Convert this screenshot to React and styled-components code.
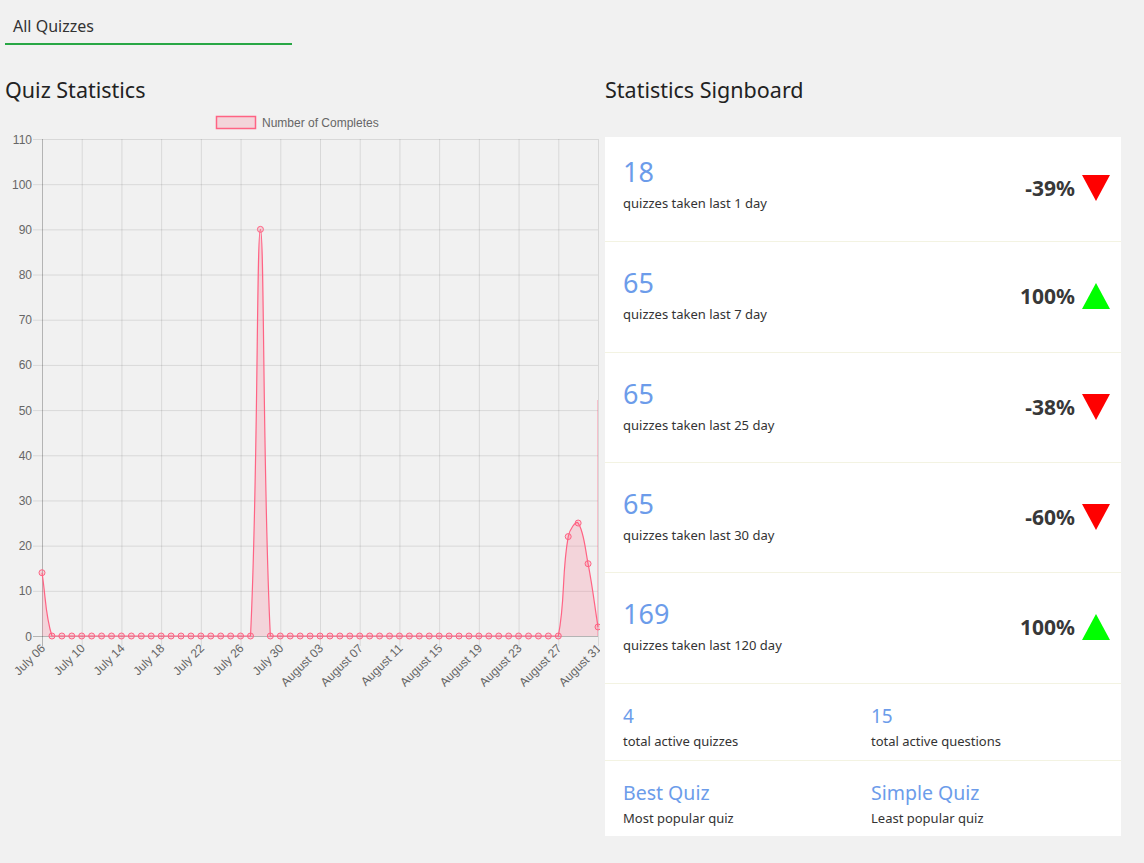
import styled, { createGlobalStyle } from "styled-components";

const GlobalStyle = createGlobalStyle`
  html, body {
    margin: 0;
    padding: 0;
    background: #f1f1f1;
    font-family: "Noto Sans", "Open Sans", sans-serif;
    color: #222;
  }
`;

const Page = styled.div`
  width: 1144px;
  min-height: 863px;
`;

const TabBar = styled.div`
  padding: 15px 0 0 5px;
`;

const Tab = styled.div`
  width: 287px;
  padding: 0 8px 6px;
  box-sizing: border-box;
  font-size: 16px;
  line-height: 22px;
  color: #333;
  border-bottom: 2px solid #28a745;
`;

const Columns = styled.div`
  display: grid;
  grid-template-columns: 600px 516px;
  column-gap: 5px;
  margin-top: 30px;
`;

const Column = styled.div`
  display: flex;
  flex-direction: column;
`;

const Heading = styled.h2`
  margin: 0;
  padding-left: ${({ $inset }) => ($inset ? "5px" : "0")};
  font-size: 21.5px;
  font-weight: 400;
  line-height: 30px;
  color: #222;
`;

const Board = styled.div`
  margin-top: 32px;
  background: #fff;
`;

const StatRow = styled.div`
  display: flex;
  align-items: center;
  justify-content: space-between;
  height: ${({ $h }) => $h}px;
  padding: 0 11px 0 18px;
  box-sizing: border-box;
  border-bottom: 1px solid #f3f3e2;
`;

const StatText = styled.div`
  display: flex;
  flex-direction: column;
  margin-top: ${({ $lift }) => -$lift}px;
`;

const BigNumber = styled.div`
  font-size: 27px;
  line-height: 32px;
  color: #6c9cea;
`;

const Caption = styled.div`
  font-size: 13px;
  line-height: 18px;
  color: #333;
  margin-top: ${({ $gap }) => $gap || 0}px;
`;

const Change = styled.div`
  display: flex;
  align-items: center;
  gap: 7px;
  font-size: 21px;
  font-weight: 700;
  color: #383838;
  margin-top: -2px;
`;

const Triangle = styled.span`
  width: 0;
  height: 0;
  border-left: 14px solid transparent;
  border-right: 14px solid transparent;
  ${({ $up }) =>
    $up
      ? "border-bottom: 26px solid #00ff00;"
      : "border-top: 26px solid #ff0000;"}
`;

const PairRow = styled.div`
  display: grid;
  grid-template-columns: 248px 1fr;
  align-items: start;
  height: ${({ $h }) => $h}px;
  padding: 20px 0 0 18px;
  box-sizing: border-box;
  border-bottom: ${({ $last }) => ($last ? "none" : "1px solid #f3f3e2")};
`;

const PairCell = styled.div`
  display: flex;
  flex-direction: column;
`;

const MidNumber = styled.div`
  font-size: 19px;
  line-height: 24px;
  color: #6c9cea;
`;

const QuizName = styled.div`
  font-size: 19.5px;
  line-height: 24px;
  color: #6c9cea;
`;

const ChartSvg = styled.svg`
  display: block;
  margin-top: 5px;
  font-family: "Liberation Sans", Arial, sans-serif;
`;

const stats = [
  { n: 18, days: 1, pct: "-39%", up: false, h: 105, lift: 10 },
  { n: 65, days: 7, pct: "100%", up: true, h: 111, lift: 4 },
  { n: 65, days: 25, pct: "-38%", up: false, h: 110, lift: 4 },
  { n: 65, days: 30, pct: "-60%", up: false, h: 110, lift: 4 },
  { n: 169, days: 120, pct: "100%", up: true, h: 111, lift: 4 },
];

const data = [
  14, ...Array(21).fill(0), 90, ...Array(30).fill(0), 22, 25, 16, 2,
];

const L = 42;
const R = 598;
const T = 29;
const B = 526;
const xAt = (i) => L + (i * (R - L)) / (data.length - 1);
const yAt = (v) => B - (v * (B - T)) / 110;

function curvePath(pts) {
  const t = 0.4;
  const ctrl = pts.map((p, i) => {
    const prev = pts[i - 1] || p;
    const next = pts[i + 1] || p;
    const d01 = Math.hypot(p.x - prev.x, p.y - prev.y);
    const d12 = Math.hypot(next.x - p.x, next.y - p.y);
    const sum = d01 + d12 || 1;
    const fa = (t * d01) / sum;
    const fb = (t * d12) / sum;
    const cap = (y) => Math.min(B, Math.max(T, y));
    return {
      px: p.x - fa * (next.x - prev.x),
      py: cap(p.y - fa * (next.y - prev.y)),
      nx: p.x + fb * (next.x - prev.x),
      ny: cap(p.y + fb * (next.y - prev.y)),
    };
  });
  let d = `M${pts[0].x},${pts[0].y}`;
  for (let i = 1; i < pts.length; i++) {
    const a = ctrl[i - 1];
    const b = ctrl[i];
    d += ` C${a.nx},${a.ny} ${b.px},${b.py} ${pts[i].x},${pts[i].y}`;
  }
  return d;
}

const labels = [
  "July 06", "July 10", "July 14", "July 18", "July 22", "July 26",
  "July 30", "August 03", "August 07", "August 11", "August 15",
  "August 19", "August 23", "August 27", "August 31",
];

function Chart() {
  const pts = data.map((v, i) => ({ x: xAt(i), y: yAt(v) }));
  const line = curvePath(pts);
  const area = `${line} L${R},${B} L${L},${B} Z`;
  const yTicks = Array.from({ length: 12 }, (_, i) => i * 10);

  return (
    <ChartSvg width="600" height="590" viewBox="0 0 600 590">
      <rect x="216.5" y="6.5" width="39" height="12" fill="rgba(255,99,132,0.2)" stroke="rgb(255,99,132)" strokeWidth="1.5" />
      <text x="262" y="16.5" fontSize="12" fill="#666">Number of Completes</text>

      {yTicks.map((v) => (
        <g key={v}>
          <line x1="33" x2={R} y1={yAt(v) + 0.5} y2={yAt(v) + 0.5} stroke={v === 0 ? "rgba(0,0,0,0.25)" : "rgba(0,0,0,0.1)"} />
          <text x="32" y={yAt(v) + 4.5} fontSize="12" fill="#666" textAnchor="end">{v}</text>
        </g>
      ))}

      {labels.map((lab, k) => {
        const x = xAt(k * 4);
        return (
          <g key={lab}>
            <line x1={x + 0.5} x2={x + 0.5} y1={T} y2={B + 10} stroke={k === 0 ? "rgba(0,0,0,0.25)" : "rgba(0,0,0,0.1)"} />
            <text transform={`translate(${x + 4},${B + 13}) rotate(-45)`} fontSize="12" fill="#666" textAnchor="end">{lab}</text>
          </g>
        );
      })}

      <line x1={R - 0.5} x2={R - 0.5} y1="290" y2={B} stroke="rgba(255,99,132,0.35)" />
      <path d={area} fill="rgba(255,99,132,0.2)" />
      <path d={line} fill="none" stroke="rgb(255,99,132)" strokeWidth="1.2" />
      {pts.map((p, i) => (
        <circle key={i} cx={p.x} cy={p.y} r="3" fill="rgba(255,99,132,0.2)" stroke="rgb(255,99,132)" strokeWidth="1" />
      ))}
    </ChartSvg>
  );
}

export default function App() {
  return (
    <Page>
      <GlobalStyle />
      <TabBar>
        <Tab>All Quizzes</Tab>
      </TabBar>
      <Columns>
        <Column>
          <Heading $inset>Quiz Statistics</Heading>
          <Chart />
        </Column>
        <Column>
          <Heading>Statistics Signboard</Heading>
          <Board>
            {stats.map((s) => (
              <StatRow key={s.days} $h={s.h}>
                <StatText $lift={s.lift}>
                  <BigNumber>{s.n}</BigNumber>
                  <Caption $gap={6}>quizzes taken last {s.days} day</Caption>
                </StatText>
                <Change>
                  {s.pct}
                  <Triangle $up={s.up} />
                </Change>
              </StatRow>
            ))}
            <PairRow $h={77}>
              <PairCell>
                <MidNumber>4</MidNumber>
                <Caption $gap={4}>total active quizzes</Caption>
              </PairCell>
              <PairCell>
                <MidNumber>15</MidNumber>
                <Caption $gap={4}>total active questions</Caption>
              </PairCell>
            </PairRow>
            <PairRow $h={75} $last>
              <PairCell>
                <QuizName>Best Quiz</QuizName>
                <Caption $gap={4}>Most popular quiz</Caption>
              </PairCell>
              <PairCell>
                <QuizName>Simple Quiz</QuizName>
                <Caption $gap={4}>Least popular quiz</Caption>
              </PairCell>
            </PairRow>
          </Board>
        </Column>
      </Columns>
    </Page>
  );
}
